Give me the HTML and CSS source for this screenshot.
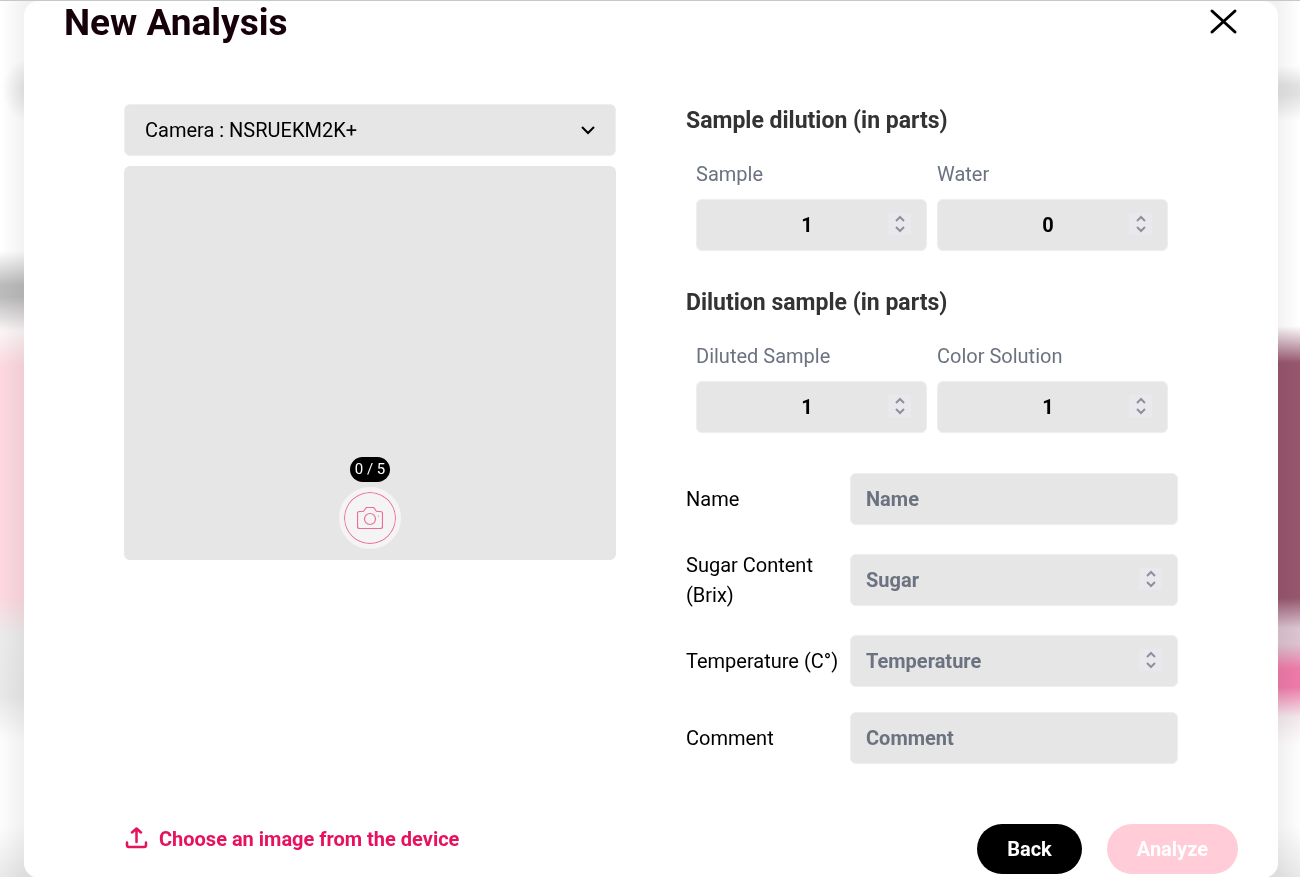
FILE: index.html
```
<!DOCTYPE html>
<html lang="en">
<head>
    <meta charset="UTF-8">
    <meta name="viewport" content="width=device-width, initial-scale=1.0">
    <title>New Analysis</title>
    <link rel="stylesheet" href="styles.css">
</head>
<body>
    <div class="backdrop">
        <div class="backdrop-left"></div>
        <div class="backdrop-right"></div>
    </div>

    <main class="modal">
        <header class="modal-header">
            <h1>New Analysis</h1>
            <button type="button" class="close-modal" aria-label="Close">
                <svg width="30" height="30" viewBox="0 0 30 30" fill="none" stroke="currentColor" stroke-width="3" stroke-linecap="round">
                    <path d="M4 3l23 21M27 3L4 24"/>
                </svg>
            </button>
        </header>

        <form id="analysisForm" class="modal-body">
            <section class="capture">
                <select class="field camera-select" aria-label="Camera">
                    <option>Camera : NSRUEKM2K+</option>
                </select>
                <div class="preview">
                    <span class="counter">0 / 5</span>
                    <button type="button" class="shutter" aria-label="Take a picture">
                        <svg width="26" height="22" viewBox="0 0 26 22" fill="none" stroke="currentColor" stroke-width="1.2" stroke-linejoin="round">
                            <path d="M2.500 4.500H5.500Q6.500 4.500 7.200 3.500L8.500 1.500Q9 .5 10 .5H16Q17 .5 17.500 1.500L18.800 3.500Q19.500 4.500 20.500 4.500H23.500Q25.500 4.500 25.500 6.500V19.500Q25.500 21.500 23.500 21.500H2.500Q.5 21.500 .5 19.500V6.500Q.5 4.500 2.500 4.500Z"/>
                            <circle cx="13" cy="12" r="5.500"/>
                            <circle cx="21.500" cy="9" r=".6" fill="currentColor" stroke="none"/>
                        </svg>
                    </button>
                </div>
            </section>

            <section class="details">
                <h2>Sample dilution (in parts)</h2>
                <div class="parts">
                    <div class="part">
                        <label for="sample">Sample</label>
                        <input class="field" type="number" id="sample" value="1" min="0">
                    </div>
                    <div class="part">
                        <label for="water">Water</label>
                        <input class="field" type="number" id="water" value="0" min="0">
                    </div>
                </div>

                <h2>Dilution sample (in parts)</h2>
                <div class="parts">
                    <div class="part">
                        <label for="dilutedSample">Diluted Sample</label>
                        <input class="field" type="number" id="dilutedSample" value="1" min="0">
                    </div>
                    <div class="part">
                        <label for="colorSolution">Color Solution</label>
                        <input class="field" type="number" id="colorSolution" value="1" min="0">
                    </div>
                </div>

                <div class="rows">
                    <label for="name">Name</label>
                    <input class="field" type="text" id="name" placeholder="Name">
                    <label for="sugar">Sugar Content (Brix)</label>
                    <input class="field" type="number" id="sugar" placeholder="Sugar">
                    <label for="temperature">Temperature (C°)</label>
                    <input class="field" type="number" id="temperature" placeholder="Temperature">
                    <label for="comment">Comment</label>
                    <input class="field" type="text" id="comment" placeholder="Comment">
                </div>
            </section>
        </form>

        <footer class="modal-footer">
            <button type="button" class="upload">
                <svg width="25" height="25" viewBox="0 0 25 25" fill="none" stroke="currentColor" stroke-width="2.500" stroke-linecap="round" stroke-linejoin="round">
                    <path d="M12.500 15V1.500M8 5.500l4.500-4 4.500 4M3 15.500v2.500q0 2 2 2h15q2 0 2-2v-2.500"/>
                </svg>
                Choose an image from the device
            </button>
            <div class="actions">
                <button type="button" class="btn btn-back">Back</button>
                <button type="submit" form="analysisForm" class="btn btn-analyze" disabled>Analyze</button>
            </div>
        </footer>
    </main>
</body>
</html>
```
FILE: styles.css
```
:root {
    --primary-color: #e6125f;
    --primary-light: #ffccd8;
    --field-color: #e6e6e6;
    --muted-color: #6b7280;
}

* {
    margin: 0;
    padding: 0;
    box-sizing: border-box;
}

body {
    font-family: Roboto, sans-serif;
    font-size: 20px;
    line-height: 30px;
    color: #000;
    border-top: 1px solid #c8c8c8;
    overflow: hidden;
}

button,
input,
select {
    font: inherit;
    color: inherit;
}

button {
    border: none;
    background: none;
    cursor: pointer;
}

/* blurred page behind the modal */
.backdrop {
    position: fixed;
    inset: 1px 0 0;
    z-index: -1;
    display: flex;
}

.backdrop-left,
.backdrop-right {
    flex: 1;
}

.backdrop-left {
    background:
        linear-gradient(to right, transparent, rgba(0, 0, 0, 0.05) 24px),
        radial-gradient(28px 32px at 30px 89px, rgba(0, 0, 0, 0.12), transparent),
        linear-gradient(#fff 250px, #bbb 284px, #bbb 296px, #fbf5f6 330px, #fdd8e0 365px, #fdd8e0 595px, #ebebeb 635px, #e8e8e8 695px, #fdfdfd 740px, #fdfdfd 825px, #e8e8e8 877px);
}

.backdrop-right {
    background:
        linear-gradient(to left, transparent, rgba(0, 0, 0, 0.05) 22px),
        linear-gradient(#fff 65px, #e2e2e2 84px, #e2e2e2 94px, #fff 120px, #fff 325px, #96566e 362px, #96566e 597px, #dcc3cf 627px, #dcc3cf 643px, #ee7aa8 668px, #ee7aa8 686px, #f3e8ec 716px, #fdfdfd 745px, #fdfdfd 825px, #e8e8e8 877px);
}

.modal {
    margin: 0 22px 0 24px;
    padding-bottom: 4px;
    background-color: #fff;
    border-radius: 15px;
}

.modal-header {
    display: flex;
    justify-content: space-between;
    padding: 0 40px;
}

h1 {
    font-size: 37px;
    line-height: 43px;
    font-weight: 700;
    color: #16000a;
}

.close-modal {
    display: flex;
    align-items: center;
}

.modal-body {
    display: grid;
    grid-template-columns: 1fr 1fr;
    gap: 70px;
    padding: 60px 100px;
}

.field {
    width: 100%;
    height: 52px;
    padding: 0 15px;
    border: 1px solid #eee;
    border-radius: 6px;
    background-color: var(--field-color);
    font-weight: 700;
}

.field::placeholder {
    color: var(--muted-color);
}

.camera-select {
    padding: 0 20px;
    font-weight: 400;
    appearance: none;
    background-image: url("data:image/svg+xml,%3Csvg xmlns='http://www.w3.org/2000/svg' width='14' height='10' fill='none' stroke='black' stroke-width='2'%3E%3Cpath d='M1 2l6 6 6-6'/%3E%3C/svg%3E");
    background-repeat: no-repeat;
    background-position: right 20px center;
}

.preview {
    display: flex;
    flex-direction: column;
    align-items: center;
    justify-content: flex-end;
    gap: 5px;
    aspect-ratio: 5 / 4;
    margin-top: 10px;
    padding-bottom: 11px;
    border-radius: 6px;
    background-color: var(--field-color);
}

.counter {
    padding: 0 5px;
    border-radius: 13px;
    background-color: #000;
    color: #fff;
    font-size: 15px;
    line-height: 25px;
}

.shutter {
    display: flex;
    align-items: center;
    justify-content: center;
    width: 62px;
    height: 62px;
    border: 5px solid #f4f4f4;
    border-radius: 50%;
    background-color: #f4f4f4;
    box-shadow: inset 0 0 0 1px #ee6c9c;
    color: #ee6c9c;
}

h2 {
    padding-top: 2px;
    font-size: 23px;
    font-weight: 700;
    color: #333;
}

.parts {
    display: grid;
    grid-template-columns: 1fr 1fr;
    gap: 10px;
    padding: 23px 10px 35px;
}

.part label {
    display: block;
    margin-bottom: 10px;
    color: var(--muted-color);
}

.part .field {
    text-align: center;
}

input[type="number"]::-webkit-inner-spin-button {
    appearance: none;
    width: 23px;
    height: 22px;
    margin-left: -14px;
    opacity: 1;
    background: #e9e9ed url("data:image/svg+xml,%3Csvg xmlns='http://www.w3.org/2000/svg' width='12' height='18' fill='none' stroke='%238f8f9d' stroke-width='2'%3E%3Cpath d='M2 6l4-4 4 4M2 12l4 4 4-4'/%3E%3C/svg%3E") no-repeat center;
}

.rows {
    display: grid;
    grid-template-columns: 1fr 2fr;
    align-items: center;
    row-gap: 25px;
    padding-top: 5px;
}

.modal-footer {
    display: flex;
    justify-content: space-between;
    align-items: flex-start;
    padding: 0 40px 0 100px;
}

.upload {
    display: flex;
    align-items: center;
    gap: 10px;
    color: var(--primary-color);
    font-weight: 700;
}

.actions {
    display: flex;
    gap: 25px;
}

.btn {
    height: 50px;
    padding: 0 30px;
    border-radius: 25px;
    color: #fff;
    font-weight: 700;
}

.btn-back {
    background-color: #000;
}

.btn-analyze {
    background-color: var(--primary-light);
}
```
